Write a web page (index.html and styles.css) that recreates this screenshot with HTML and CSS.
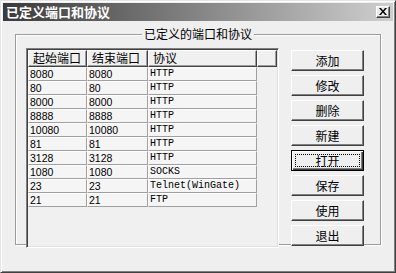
FILE: index.html
```html
<!DOCTYPE html>
<html>
<head>
<meta charset="utf-8">
<link rel="stylesheet" href="styles.css">
</head>
<body>
<div class="window">
  <div class="titlebar">
    <span class="title">已定义端口和协议</span>
    <span class="close"><svg width="8" height="7" viewBox="0 0 8 7"><path d="M0 0h2l2 2.5L6 0h2L5 3.5 8 7H6L4 4.5 2 7H0l3-3.5z" fill="#000"/></svg></span>
  </div>
  <fieldset class="group">
    <legend class="group-title">已定义的端口和协议</legend>
    <div class="group-body">
      <div class="listbox">
        <div class="grid">
          <div class="hcell">起始端口</div><div class="hcell">结束端口</div><div class="hcell">协议</div><div class="hcell"></div>
          <div class="cell num">8080</div><div class="cell num">8080</div><div class="cell mono">HTTP</div><div class="blank"></div>
          <div class="cell num">80</div><div class="cell num">80</div><div class="cell mono">HTTP</div><div class="blank"></div>
          <div class="cell num">8000</div><div class="cell num">8000</div><div class="cell mono">HTTP</div><div class="blank"></div>
          <div class="cell num">8888</div><div class="cell num">8888</div><div class="cell mono">HTTP</div><div class="blank"></div>
          <div class="cell num">10080</div><div class="cell num">10080</div><div class="cell mono">HTTP</div><div class="blank"></div>
          <div class="cell num">81</div><div class="cell num">81</div><div class="cell mono">HTTP</div><div class="blank"></div>
          <div class="cell num">3128</div><div class="cell num">3128</div><div class="cell mono">HTTP</div><div class="blank"></div>
          <div class="cell num">1080</div><div class="cell num">1080</div><div class="cell mono">SOCKS</div><div class="blank"></div>
          <div class="cell num">23</div><div class="cell num">23</div><div class="cell mono">Telnet(WinGate)</div><div class="blank"></div>
          <div class="cell num">21</div><div class="cell num">21</div><div class="cell mono">FTP</div><div class="blank"></div>
        </div>
      </div>
      <div class="buttons">
        <div class="btn"><span>添加</span></div>
        <div class="btn"><span>修改</span></div>
        <div class="btn"><span>删除</span></div>
        <div class="btn"><span>新建</span></div>
        <div class="btn focus"><span>打开</span></div>
        <div class="btn"><span>保存</span></div>
        <div class="btn"><span>使用</span></div>
        <div class="btn"><span>退出</span></div>
      </div>
    </div>
  </fieldset>
</div>
</body>
</html>
```
FILE: styles.css
```css
html, body {
  margin: 0;
  padding: 0;
  background: #efefef;
}
body {
  font-family: "Noto Sans CJK SC", "Liberation Sans", sans-serif;
  font-size: 12px;
  color: #000;
}
.window {
  width: 396px;
  height: 273px;
  box-sizing: border-box;
  background: #efefef;
  border-style: solid;
  border-width: 1px;
  border-color: #e4e4e4 #404040 #404040 #e4e4e4;
  box-shadow: inset 1px 1px 0 #fff, inset -1px -1px 0 #808080;
  padding: 2px;
  display: flex;
  flex-direction: column;
}
.titlebar {
  height: 18px;
  flex: none;
  background: linear-gradient(to right, #3a3a3a, #cfcfcf);
  display: flex;
  align-items: center;
  justify-content: space-between;
  padding: 0 3px 0 3px;
}
.title {
  color: #fff;
  font-weight: bold;
  font-size: 13px;
  line-height: 18px;
  letter-spacing: 0px;
}
.close {
  width: 14px;
  height: 12px;
  box-sizing: border-box;
  background: #ebebeb;
  border-style: solid;
  border-width: 1px;
  border-color: #fff #404040 #404040 #fff;
  box-shadow: inset -1px -1px 0 #808080;
  display: flex;
  align-items: center;
  justify-content: center;
}
.close svg { display: block; margin: 0 1px 1px 0; }
.group {
  margin: 6px 12px 0 12px;
  padding: 7px 10px 0 10px;
  border: 1px solid #9c9c9c;
  box-shadow: inset 1px 1px 0 #fff, 1px 1px 0 #fff;
  min-width: 0;
  height: 218px;
  box-sizing: border-box;
}
.group-title {
  margin: 0 auto;
  padding: 0 2px;
  line-height: 14px;
  font-size: 12px;
  background: #efefef;
}
.group-body {
  display: flex;
  gap: 12px;
  align-items: flex-start;
}
.listbox {
  width: 253px;
  height: 200px;
  box-sizing: border-box;
  border-style: solid;
  border-width: 1px;
  border-color: #808080 #fff #fff #808080;
  box-shadow: inset 1px 1px 0 #404040, inset -1px -1px 0 #e0e0e0;
  padding: 1px;
  background: #f0f0f0;
}
.grid {
  display: grid;
  grid-template-columns: 59px 61px 109px 20px;
  grid-auto-rows: 14px;
  grid-template-rows: 17px;
}
.hcell {
  box-sizing: border-box;
  border-style: solid;
  border-width: 1px;
  border-color: #fff #404040 #404040 #fff;
  box-shadow: inset -1px -1px 0 #a0a0a0;
  padding-left: 4px;
  line-height: 14px;
  font-size: 12px;
  white-space: nowrap;
  overflow: hidden;
}
.cell {
  box-sizing: border-box;
  border-style: solid;
  border-width: 1px;
  border-color: #fff #a0a0a0 #a0a0a0 #fff;
  background: #f5f5f5;
  padding-left: 1px;
  line-height: 12px;
  white-space: nowrap;
  overflow: hidden;
}
.num {
  font-family: "Liberation Sans", Arial, sans-serif;
  font-size: 10.5px;
}
.mono {
  font-family: "Liberation Mono", "Courier New", monospace;
  font-size: 10px;
}
.buttons {
  display: flex;
  flex-direction: column;
  gap: 4px;
  padding-top: 2px;
}
.btn {
  width: 73px;
  height: 21px;
  box-sizing: border-box;
  border-style: solid;
  border-width: 1px;
  border-color: #fff #404040 #404040 #fff;
  box-shadow: inset -1px -1px 0 #808080;
  display: flex;
  align-items: center;
  justify-content: center;
  font-size: 12px;
  line-height: 14px;
}
.btn.focus {
  border: 1px solid #000;
  box-shadow: inset 1px 1px 0 #fff, inset -1px -1px 0 #404040, inset -2px -2px 0 #808080;
  padding: 3px;
}
.btn.focus span {
  flex: 1;
  align-self: stretch;
  display: flex;
  align-items: center;
  justify-content: center;
  outline: 1px dotted #000;
  outline-offset: -1px;
}
```
